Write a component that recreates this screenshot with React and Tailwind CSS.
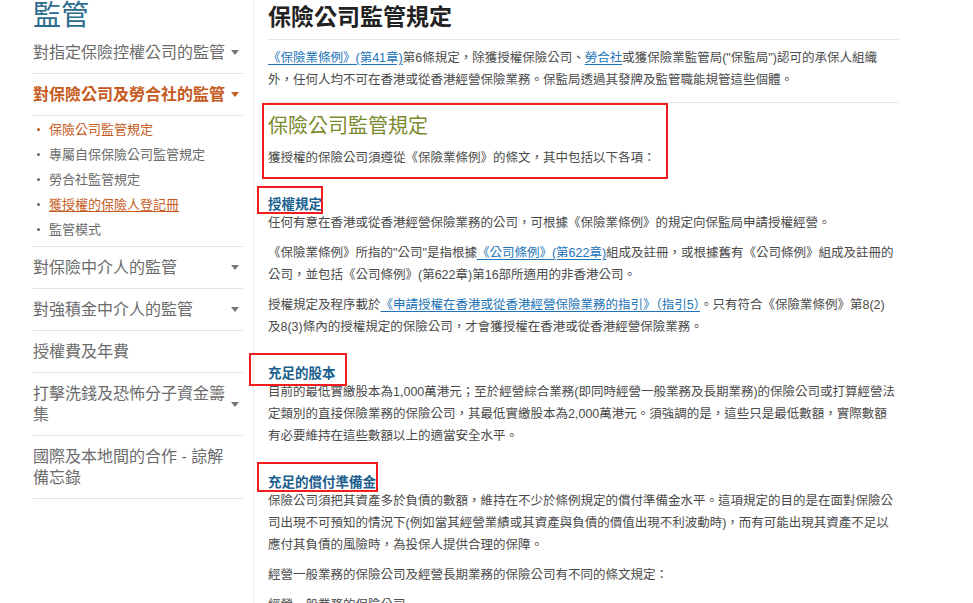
const caret = (color) => (
  <svg width="8" height="5" viewBox="0 0 8 5" className="shrink-0">
    <path d="M0 0h8L4 5z" fill={color} />
  </svg>
)

function NavItem({ label, hasCaret, active }) {
  return (
    <div className="flex items-center justify-between py-[10px] border-b border-[#e2e2e2]">
      <span
        className={`w-[196px] text-[16px] leading-[21px] ${active ? 'font-bold text-[#c65b1e]' : 'text-[#6b6b6b]'}`}
      >
        {label}
      </span>
      {hasCaret && <span className="pr-[4px]">{caret(active ? '#c65b1e' : '#777')}</span>}
    </div>
  )
}

const subItems = [
  { label: '保險公司監管規定', active: true },
  { label: '專屬自保保險公司監管規定' },
  { label: '勞合社監管規定' },
  { label: '獲授權的保險人登記冊', link: true },
  { label: '監管模式' },
]

function RedBox({ className }) {
  return <span className={`absolute border-2 border-[#f21d1d] pointer-events-none ${className}`} />
}

function Link({ children }) {
  return <a className="text-[#2173b8] underline underline-offset-2">{children}</a>
}

export default function App() {
  return (
    <div className="flex h-[603px] overflow-hidden bg-white font-['Liberation_Sans','Noto_Sans_CJK_TC',sans-serif]">
      {/* Sidebar */}
      <aside className="w-[254px] shrink-0 pl-[33px] pr-[10px] border-r border-[#ececec]">
        <h1 className="text-[28px] leading-[32px] text-[#2b6b8e]">監管</h1>
        <NavItem label="對指定保險控權公司的監管" hasCaret />
        <NavItem label="對保險公司及勞合社的監管" hasCaret active />
        <ul className="pt-[1px] pb-[4px] border-b border-[#e2e2e2]">
          {subItems.map((it) => (
            <li key={it.label} className="flex items-center gap-[9px] pl-[4px] text-[13px] leading-[25px]">
              <span className={`w-[3px] h-[3px] rounded-full ${it.active ? 'bg-[#c65b1e]' : 'bg-[#5d6b78]'}`} />
              <span
                className={
                  it.active
                    ? 'text-[#c65b1e]'
                    : it.link
                      ? 'text-[#c65b1e] underline underline-offset-2'
                      : 'text-[#6b6b6b]'
                }
              >
                {it.label}
              </span>
            </li>
          ))}
        </ul>
        <NavItem label="對保險中介人的監管" hasCaret />
        <NavItem label="對強積金中介人的監管" hasCaret />
        <NavItem label="授權費及年費" />
        <NavItem label="打擊洗錢及恐怖分子資金籌集" hasCaret />
        <NavItem label="國際及本地間的合作 - 諒解備忘錄" />
      </aside>

      {/* Main content */}
      <main className="w-[645px] pl-[14px] text-[12.5px] leading-[22px] text-[#4a4a4a]">
        <h2 className="text-[23px] font-bold leading-[34px] pb-[5px] text-[#222] border-b border-[#e6e6e6]">
          保險公司監管規定
        </h2>
        <p className="pt-[7px] pb-[11px] border-b border-[#e6e6e6]">
          <Link>《保險業條例》(第41章)</Link>第6條規定，除獲授權保險公司、<Link>勞合社</Link>
          或獲保險業監管局("保監局")認可的承保人組織外，任何人均不可在香港或從香港經營保險業務。保監局透過其發牌及監管職能規管這些個體。
        </p>

        <section className="relative pt-[9px]">
          <RedBox className="-left-[6px] top-0 w-[406px] h-[76px]" />
          <h3 className="text-[20px] leading-[28px] text-[#7b8a2b]">保險公司監管規定</h3>
          <p className="mt-[7px] mb-[8px]">獲授權的保險公司須遵從《保險業條例》的條文，其中包括以下各項：</p>
        </section>

        <section>
          <h4 className="relative mt-[28px] text-[13.5px] font-bold leading-[15px] text-[#1b5f8f]">
            <RedBox className="-left-[11px] -top-[11px] w-[66px] h-[28px]" />
            授權規定
          </h4>
          <p className="mb-[8px]">任何有意在香港或從香港經營保險業務的公司，可根據《保險業條例》的規定向保監局申請授權經營。</p>
          <p className="mb-[8px]">
            《保險業條例》所指的"公司"是指根據<Link>《公司條例》(第622章)</Link>
            組成及註冊，或根據舊有《公司條例》組成及註冊的公司，並包括《公司條例》(第622章)第16部所適用的非香港公司。
          </p>
          <p className="mb-[8px]">
            授權規定及程序載於<Link>《申請授權在香港或從香港經營保險業務的指引》（指引5）</Link>
            。只有符合《保險業條例》第8(2)
            <br />
            及8(3)條內的授權規定的保險公司，才會獲授權在香港或從香港經營保險業務。
          </p>
        </section>

        <section>
          <h4 className="relative mt-[28px] text-[13.5px] font-bold leading-[15px] text-[#1b5f8f]">
            <RedBox className="-left-[19px] -top-[13px] w-[98px] h-[33px]" />
            充足的股本
          </h4>
          <p className="mb-[8px]">
            目前的最低實繳股本為1,000萬港元；至於經營綜合業務(即同時經營一般業務及長期業務)的保險公司或打算經營法定類別的直接保險業務的保險公司，其最低實繳股本為2,000萬港元。須強調的是，這些只是最低數額，實際數額有必要維持在這些數額以上的適當安全水平。
          </p>
        </section>

        <section>
          <h4 className="relative mt-[28px] text-[13.5px] font-bold leading-[15px] text-[#1b5f8f]">
            <RedBox className="-left-[11px] -top-[13px] w-[121px] h-[30px]" />
            充足的償付準備金
          </h4>
          <p className="mb-[8px]">
            保險公司須把其資產多於負債的數額，維持在不少於條例規定的償付準備金水平。這項規定的目的是在面對保險公司出現不可預知的情況下(例如當其經營業績或其資產與負債的價值出現不利波動時)，而有可能出現其資產不足以應付其負債的風險時，為投保人提供合理的保障。
          </p>
          <p className="mb-[8px]">經營一般業務的保險公司及經營長期業務的保險公司有不同的條文規定：</p>
          <p>經營一般業務的保險公司</p>
        </section>
      </main>
    </div>
  )
}
